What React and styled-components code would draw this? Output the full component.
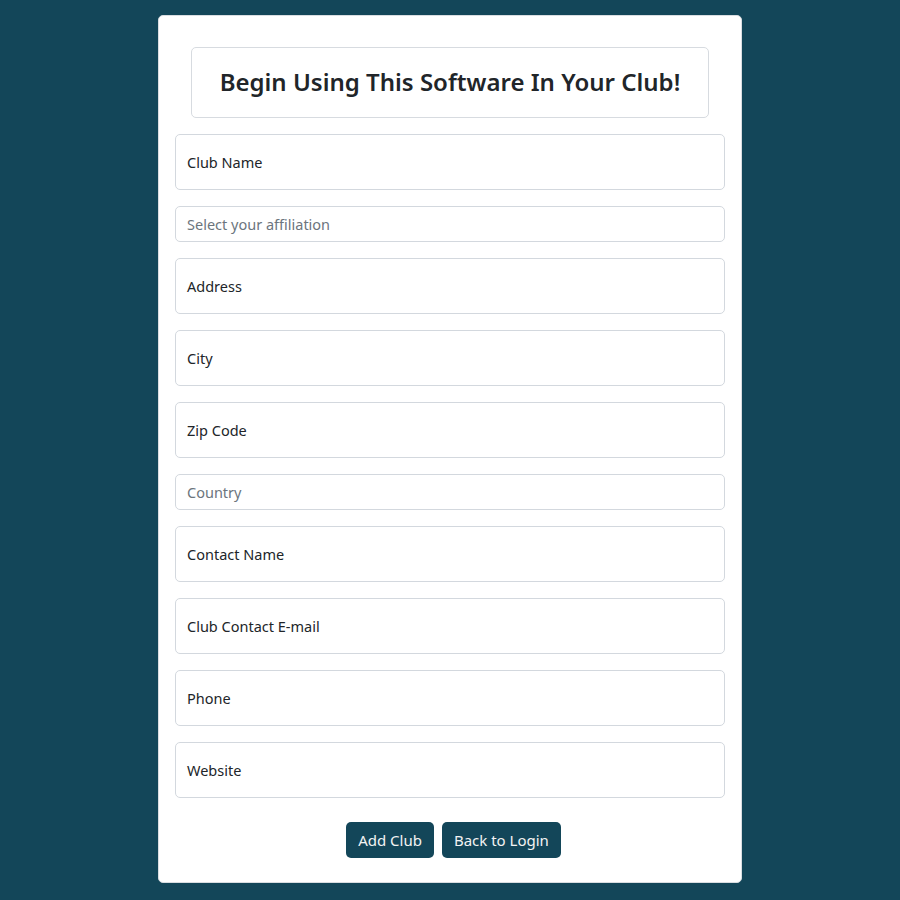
import styled, { createGlobalStyle } from 'styled-components';

const GlobalStyle = createGlobalStyle`
  html, body {
    margin: 0;
    padding: 0;
    background: #134659;
    font-family: 'Noto Sans', 'Open Sans', sans-serif;
  }
  * { box-sizing: border-box; }
`;

const Page = styled.div`
  min-height: 900px;
  display: flex;
  justify-content: center;
  align-items: flex-start;
  padding-top: 15px;
`;

const Card = styled.form`
  width: 584px;
  background: #fff;
  border: 1px solid #d9dde1;
  border-radius: 5px;
  padding: 31px 16px 24px;
  display: flex;
  flex-direction: column;
`;

const TitleBox = styled.div`
  margin: 0 16px 16px;
  height: 71px;
  flex-shrink: 0;
  border: 1px solid #d7dbe0;
  border-radius: 5px;
  display: flex;
  align-items: center;
  justify-content: center;
  padding-bottom: 2px;
`;

const Title = styled.h2`
  margin: 0;
  font-size: 24px;
  font-weight: 600;
  color: #212529;
`;

const Fields = styled.div`
  display: flex;
  flex-direction: column;
  gap: 16px;
`;

const Field = styled.div`
  height: ${(p) => (p.$short ? '36px' : '56px')};
  flex-shrink: 0;
  border: 1px solid #d3d8de;
  border-radius: 5px;
  display: flex;
  align-items: center;
  padding: 0 11px;
  font-size: 14.5px;
  color: ${(p) => (p.$short ? '#6c757d' : '#212529')};
`;

const Actions = styled.div`
  margin-top: 24px;
  padding-left: 7px;
  display: flex;
  justify-content: center;
  gap: 8px;
`;

const Button = styled.button`
  height: 36px;
  padding: 0 12px;
  border: none;
  border-radius: 5px;
  background: #134659;
  color: #f3f3f3;
  font-family: inherit;
  font-size: 15px;
  cursor: pointer;
`;

const fields = [
  ['Club Name'],
  ['Select your affiliation', true],
  ['Address'],
  ['City'],
  ['Zip Code'],
  ['Country', true],
  ['Contact Name'],
  ['Club Contact E-mail'],
  ['Phone'],
  ['Website'],
];

export default function App() {
  return (
    <>
      <GlobalStyle />
      <Page>
        <Card>
          <TitleBox>
            <Title>Begin Using This Software In Your Club!</Title>
          </TitleBox>
          <Fields>
            {fields.map(([label, short]) => (
              <Field key={label} $short={short}>
                {label}
              </Field>
            ))}
          </Fields>
          <Actions>
            <Button type="button">Add Club</Button>
            <Button type="button">Back to Login</Button>
          </Actions>
        </Card>
      </Page>
    </>
  );
}
